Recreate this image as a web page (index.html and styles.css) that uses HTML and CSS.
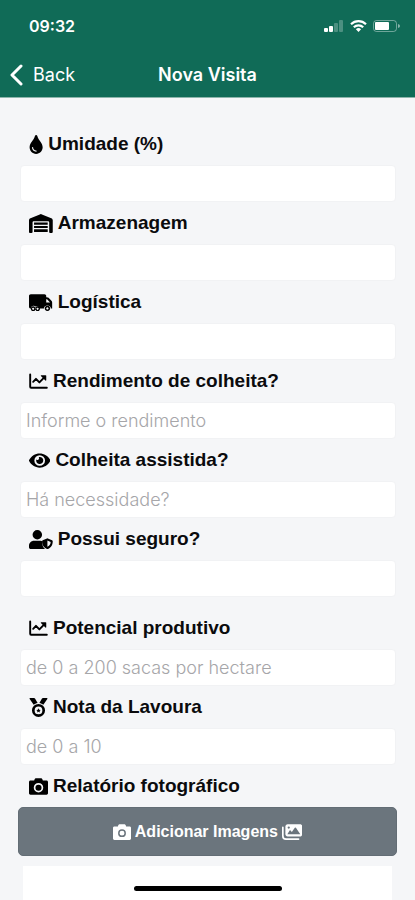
FILE: index.html
```html
<!DOCTYPE html>
<html lang="pt-BR">
<head>
	<meta charset="utf-8">
	<meta name="viewport" content="width=device-width, initial-scale=1">
	<title>Nova Visita</title>
	<link rel="stylesheet" href="styles.css">
</head>
<body>
	<header class="header">
		<div class="status">
			<span class="time">09:32</span>
			<div class="signals">
				<svg width="20" height="12" viewBox="0 0 20 12" fill="#fff"><rect x="0" y="8" width="4" height="4" rx="1"/><rect x="5" y="6" width="4" height="6" rx="1"/><rect x="10" y="3" width="4" height="9" rx="1" opacity=".25"/><rect x="15" y="0" width="4" height="12" rx="1" opacity=".25"/></svg>
				<svg width="17" height="12" viewBox="0 0 17 12" fill="none" stroke="#fff" stroke-width="2.2"><path d="M1 4.2a10.8 10.8 0 0 1 15 0M3.8 7.2a6.8 6.8 0 0 1 9.4 0"/><path d="M8.500 12L5.900 9.300a3.700 3.700 0 0 1 5.200 0z" fill="#fff" stroke="none"/></svg>
				<svg width="27" height="12" viewBox="0 0 27 12"><rect x=".5" y=".5" width="23" height="11" rx="3" fill="none" stroke="#fff" opacity=".4"/><rect x="2" y="2" width="14" height="8" rx="1" fill="#fff"/><path d="M25 4v4q2-.7 2-2t-2-2z" fill="#fff" opacity=".5"/></svg>
			</div>
		</div>
		<nav class="nav">
			<a href="#" class="back">
				<svg width="13" height="22" viewBox="0 0 13 22" fill="none" stroke="#fff" stroke-width="3" stroke-linecap="round" stroke-linejoin="round"><path d="M11 2L2 11l9 9"/></svg>
				Back
			</a>
			<h1 class="title">Nova Visita</h1>
		</nav>
	</header>

	<form class="form">
		<div class="group">
			<div class="field">
				<label for="umidade">
					<svg class="icon" viewBox="0 0 384 512"><path fill-rule="evenodd" d="M192 0c-15 0-27 9-32 24C122 158 16 199 16 333c0 99 79 179 176 179s176-80 176-179C368 199 262 158 224 24 219 9 207 0 192 0zM192 448c-61 0-112-50-112-112 0-9 7-16 16-16s16 7 16 16c0 44 36 80 80 80 9 0 16 7 16 16s-7 16-16 16z"/></svg>
					Umidade (%)
				</label>
				<input type="text" id="umidade">
			</div>
			<div class="field">
				<label for="armazenagem">
					<svg class="icon" viewBox="0 0 640 512"><path d="M0 488V171c0-26 16-50 40-59L308 5c8-3 16-3 24 0l268 107c24 9 40 33 40 59v317c0 13-11 24-24 24h-48c-13 0-24-11-24-24V224c0-18-14-32-32-32H128c-18 0-32 14-32 32v264c0 13-11 24-24 24H24c-13 0-24-11-24-24z"/><path d="M136 232h368v56H136zM136 322h368v56H136zM136 412h368v70H136z"/></svg>
					Armazenagem
				</label>
				<input type="text" id="armazenagem">
			</div>
			<div class="field">
				<label for="logistica">
					<svg class="icon" viewBox="0 0 640 512"><path fill-rule="evenodd" d="M48 32h368c27 0 48 21 48 48v32h18c17 0 34 7 46 19l77 77c12 12 19 29 19 46v162h-34a96 96 0 0 0-188 0H270a72 72 0 0 0-96-52 72 72 0 0 0-124 52H48c-27 0-48-21-48-48V80c0-27 21-48 48-48zM464 170v86h104l-82-86z"/><path fill-rule="evenodd" d="M112 360a64 64 0 1 0 1 0zM112 398a26 26 0 1 1-1 0zM232 360a64 64 0 1 0 1 0zM232 398a26 26 0 1 1-1 0zM496 344a72 72 0 1 0 1 0zM496 386a30 30 0 1 1-1 0z"/></svg>
					Logística
				</label>
				<input type="text" id="logistica">
			</div>
			<div class="field">
				<label for="rendimento">
					<svg class="icon" viewBox="0 0 512 512"><path d="M32 64v336q0 24 24 24h424M112 264l76-80 92 96 132-136" fill="none" stroke="#000" stroke-width="52" stroke-linecap="round" stroke-linejoin="round"/><path d="M328 88h120q16 0 16 16v120q-4 20-22 8L320 110q-10-16 8-22z"/></svg>
					Rendimento de colheita?
				</label>
				<input type="text" id="rendimento" placeholder="Informe o rendimento">
			</div>
			<div class="field">
				<label for="assistida">
					<svg class="icon" viewBox="0 0 576 512"><path fill-rule="evenodd" d="M573 241C518 136 411 64 288 64S58 136 3 241a32 32 0 0 0 0 30c55 105 162 177 285 177s230-72 285-177a32 32 0 0 0 0-30zM288 400a144 144 0 1 1 144-144 144 144 0 0 1-144 144z"/><path d="M288 160a95 95 0 0 0-25 4 48 48 0 0 1-67 67 96 96 0 1 0 92-71z"/></svg>
					Colheita assistida?
				</label>
				<input type="text" id="assistida" placeholder="Há necessidade?">
			</div>
			<div class="field">
				<label for="seguro">
					<svg class="icon" viewBox="0 0 640 512"><path d="M224 256a128 128 0 1 0 0-256 128 128 0 1 0 0 256zM134 288h180q24 0 46 12v55c0 62 22 117 72 157H48c-27 0-48-21-48-48v-42c0-74 60-134 134-134z"/><path fill-rule="evenodd" d="M622 274l-115-47a29 29 0 0 0-22 0l-115 47c-11 4-18 15-18 27 0 119 69 186 133 209 7 3 15 3 22 0 51-18 133-79 133-209 0-12-7-23-18-27zM496 448V286l88 36c-3 72-40 107-88 126z"/></svg>
					Possui seguro?
				</label>
				<input type="text" id="seguro">
			</div>
		</div>

		<div class="group">
			<div class="field">
				<label for="potencial">
					<svg class="icon" viewBox="0 0 512 512"><path d="M32 64v336q0 24 24 24h424M112 264l76-80 92 96 132-136" fill="none" stroke="#000" stroke-width="52" stroke-linecap="round" stroke-linejoin="round"/><path d="M328 88h120q16 0 16 16v120q-4 20-22 8L320 110q-10-16 8-22z"/></svg>
					Potencial produtivo
				</label>
				<input type="text" id="potencial" placeholder="de 0 a 200 sacas por hectare">
			</div>
			<div class="field">
				<label for="nota">
					<svg class="icon" viewBox="0 0 512 512"><path d="M30 0h104c12 0 22 6 28 16l70 116c-44 6-78 24-106 52L18 24C12 14 18 0 30 0zM482 0H378c-12 0-22 6-28 16l-70 116c44 6 78 24 106 52L494 24c6-10 0-24-12-24z"/><path fill-rule="evenodd" d="M256 160a176 176 0 1 0 0 352 176 176 0 0 0 0-352zM256 232a104 104 0 1 1 0 208 104 104 0 0 1 0-208z"/><path d="M256 278l18 38 42 6-30 29 7 42-37-20-37 20 7-42-30-29 42-6z"/></svg>
					Nota da Lavoura
				</label>
				<input type="text" id="nota" placeholder="de 0 a 10">
			</div>
			<div class="field">
				<label for="fotos">
					<svg class="icon" viewBox="0 0 512 512"><path fill-rule="evenodd" d="M149 65l-10 31H40c-22 0-40 18-40 40v304c0 22 18 40 40 40h432c22 0 40-18 40-40V136c0-22-18-40-40-40h-99l-10-31c-7-20-25-33-46-33H195c-21 0-39 13-46 33zM256 160a128 128 0 1 1 0 256 128 128 0 0 1 0-256zM256 206a82 82 0 1 0 0 164 82 82 0 0 0 0-164z"/></svg>
					Relatório fotográfico
				</label>
				<button type="button" class="add" id="fotos">
					<svg class="icon" viewBox="0 0 512 512"><path fill-rule="evenodd" d="M149 65l-10 31H40c-22 0-40 18-40 40v304c0 22 18 40 40 40h432c22 0 40-18 40-40V136c0-22-18-40-40-40h-99l-10-31c-7-20-25-33-46-33H195c-21 0-39 13-46 33zM256 176a112 112 0 1 1 0 224 112 112 0 0 1 0-224zM256 218a70 70 0 1 0 0 140 70 70 0 0 0 0-140z"/></svg>
					Adicionar Imagens
					<svg class="icon" viewBox="0 0 576 512"><path fill-rule="evenodd" d="M160 32h352c35 0 64 29 64 64v224c0 35-29 64-64 64H160c-35 0-64-29-64-64V96c0-35 29-64 64-64zM152 320h368L396 138q-16-16-32 0l-84 118-36-44q-14-14-28 0zM192 96a32 32 0 1 0 0 64 32 32 0 0 0 0-64z"/><path d="M24 120v248c0 49 39 88 88 88h360" fill="none" stroke="#fff" stroke-width="48" stroke-linecap="round"/></svg>
				</button>
			</div>
		</div>

		<div class="preview"></div>
	</form>
	<div class="home"></div>
</body>
</html>
```
FILE: styles.css
```css
*{box-sizing:border-box;margin:0;padding:0;}
body{
	background:#f5f6f8;
	color:#0b0b0d;
	font-family:Inter,"Liberation Sans",sans-serif;
	font-size:18px;
}
svg{display:block;flex:none;}
.header{
	background:#106b57;
	color:#fff;
	border-bottom:1px solid #8db5ab;
}
.status{
	display:flex;
	justify-content:space-between;
	align-items:center;
	height:52px;
	padding:0 15px 0 29px;
}
.time{font-size:16px;font-weight:600;}
.signals{display:flex;gap:6px;}
.nav{
	display:grid;
	grid-template-columns:1fr auto 1fr;
	align-items:center;
	height:45px;
	padding:0 10px;
}
.back{
	display:flex;
	align-items:center;
	gap:10px;
	color:#fff;
	text-decoration:none;
}
.title{font-size:18px;font-weight:600;}
.form{padding:25px 18px 0;overflow:hidden;}
.group{margin-bottom:10px;}
label{
	display:flex;
	align-items:center;
	gap:5px;
	height:42px;
	padding-left:11px;
	font-family:"Liberation Sans",Arial,sans-serif;
	font-size:19px;
	font-weight:bold;
}
.icon{height:19px;fill:#000;}
input{
	display:block;
	width:calc(100% - 3px);
	height:37px;
	margin-left:2px;
	padding:0 5px;
	border:1px solid #f1f2f4;
	border-radius:4px;
	background:#fff;
	font-family:inherit;
	font-size:18px;
	font-weight:300;
}
input::placeholder{color:#a6a6a9;opacity:1;}
.add{
	display:flex;
	align-items:center;
	justify-content:center;
	gap:4px;
	width:100%;
	height:49px;
	border:1px solid #636d75;
	border-radius:5px;
	background:#6b757d;
	color:#fff;
	font-family:"Liberation Sans",Arial,sans-serif;
	font-size:16px;
	font-weight:bold;
}
.add .icon{height:18px;fill:#fff;}
.preview{
	height:60px;
	margin:0 5px;
	background:#fff;
}
.home{
	position:fixed;
	left:50%;
	bottom:9px;
	width:148px;
	height:5px;
	border-radius:3px;
	background:#000;
	transform:translateX(-50%);
}
```
